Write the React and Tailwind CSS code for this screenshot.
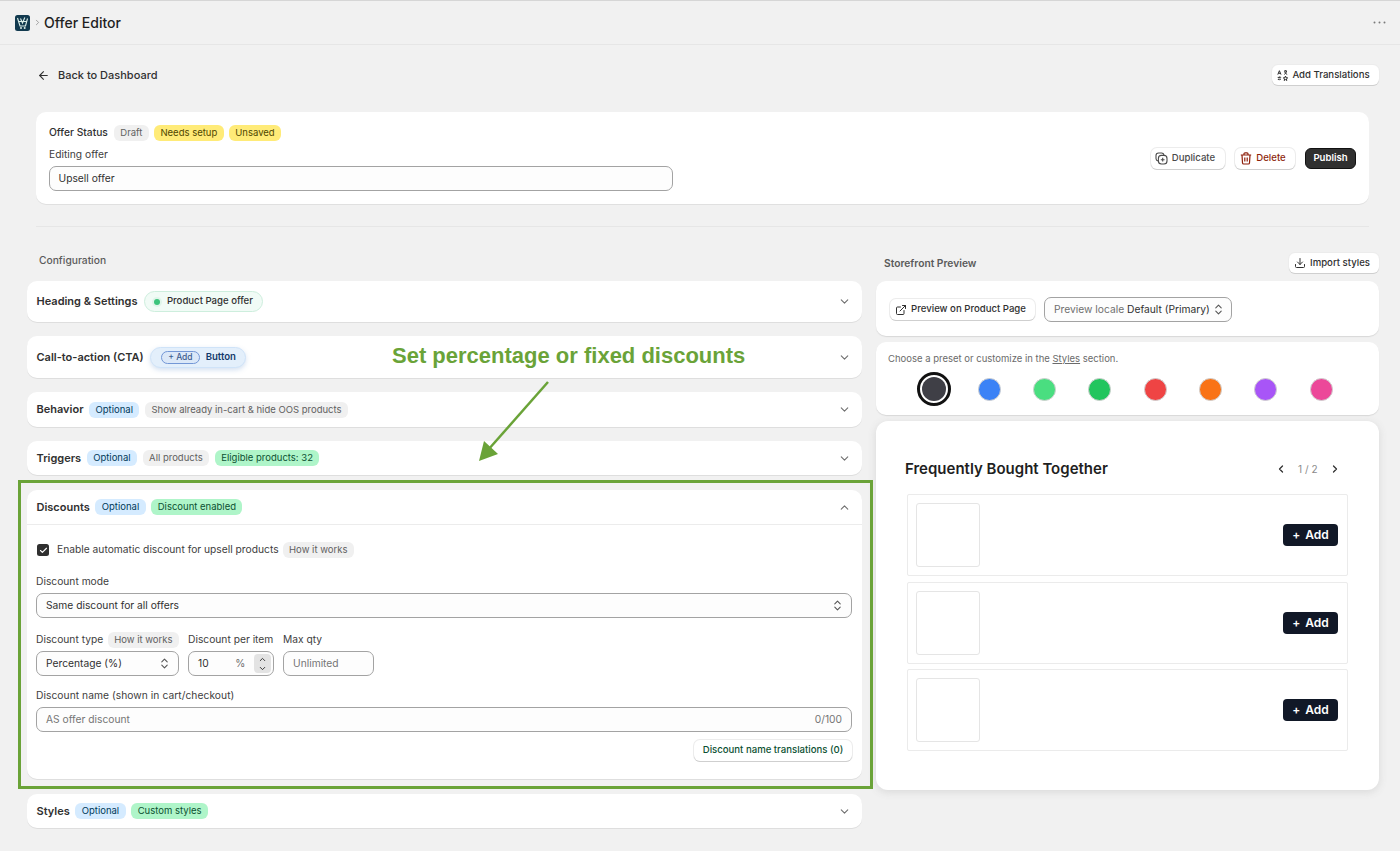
import React from "react";
import { ArrowLeft, ChevronDown, ChevronUp, ChevronLeft, ChevronRight, ChevronsUpDown, ExternalLink, Download, Check } from "lucide-react";

const Badge = ({ tone = "gray", children }) => {
  const tones = {
    gray: "bg-[#f0f0f0] text-[#616161]",
    yellow: "bg-[#ffeb78] text-[#4f4700]",
    blue: "bg-[#d5ebff] text-[#003a5a]",
    green: "bg-[#aff5c9] text-[#0c5132]",
  };
  return <span className={`inline-flex items-center h-[16px] px-[6.5px] rounded-[6px] text-[9.5px] leading-none whitespace-nowrap ${tones[tone]}`}>{children}</span>;
};

const Btn = ({ className = "", children }) => (
  <div className={`flex items-center justify-center gap-[4px] bg-white rounded-[6px] text-[9.6px] font-medium text-[#303030] shadow-[0_1px_0_0_#cfcfcf,0_0_0_1px_#ececec] whitespace-nowrap ${className}`}>{children}</div>
);

const Card = ({ title, h, children }) => (
  <div className={`bg-white rounded-[10px] shadow-[0_1px_0_0_#dedede] ${h}`}>
    <div className={`flex items-center justify-between pl-[9.5px] pr-[11px] ${h}`}>
      <div className="flex items-center gap-[5.5px]">
        <span className="text-[11px] font-semibold text-[#303030] whitespace-nowrap">{title}</span>
        {children}
      </div>
      <ChevronDown size={13} className="text-[#6f6f6f]" />
    </div>
  </div>
);

const Field = ({ className = "", children }) => (
  <div className={`flex items-center bg-[#fdfdfd] border border-[#a3a3a3] rounded-[7px] text-[10.25px] text-[#303030] ${className}`}>{children}</div>
);

const Product = () => (
  <div className="h-[82px] border border-[#ebebeb] rounded-[2px] flex items-center justify-between pl-[8px] pr-[9px]">
    <div className="w-[64px] h-[64px] border border-[#e5e5e5] rounded-[3px]" />
    <div className="w-[55px] h-[22px] bg-[#111827] rounded-[4px] text-white text-[12px] font-semibold flex items-center justify-center gap-[5px]"><span>+</span><span>Add</span></div>
  </div>
);

const colors = ["bg-[#3b82f6]", "bg-[#4ade80]", "bg-[#22c55e]", "bg-[#ef4444]", "bg-[#f97316]", "bg-[#a855f7]", "bg-[#ec4899]"];

const LangIcon = () => (
  <svg width="11" height="11" viewBox="0 0 11 11" fill="none" stroke="#303030" strokeWidth="1">
    <path d="M0.8 4.6 L2.4 0.7 L4 4.6 M1.4 3.3 H3.4" />
    <path d="M7 1 H10 M8.5 0.3 V1 M7.3 4.4 C8.6 3.6 9.4 2.4 9.5 1 M7.5 1.6 C8 3 9 4 10.2 4.5" />
    <path d="M0.7 7.4 H3.7 L2.7 6.4 M4 9.2 H1 L2 10.2" />
    <path d="M8.5 6 L9.1 7.7 L10.7 7.9 L9.4 8.9 L9.8 10.5 L8.5 9.6 L7.2 10.5 L7.6 8.9 L6.3 7.9 L7.9 7.7 Z" />
  </svg>
);

const DupIcon = () => (
  <svg width="13" height="13" viewBox="0 0 13 13" fill="none" stroke="#4a4a4a" strokeWidth="1.1">
    <path d="M3 9 C1.5 8.6 1 7.8 1 6.6 V3.6 C1 2 2 1 3.6 1 H6.6 C7.8 1 8.6 1.5 9 3" />
    <rect x="3.4" y="3.4" width="8.6" height="8.6" rx="3" />
    <path d="M7.7 5.8 V9.6 M5.8 7.7 H9.6" />
  </svg>
);

const TrashIcon = () => (
  <svg width="12" height="13" viewBox="0 0 12 13" fill="none" stroke="#8e1f0b" strokeWidth="1.2">
    <path d="M0.8 3 H11.2 M4 3 V1.8 C4 1.2 4.4 0.9 5 0.9 H7 C7.6 0.9 8 1.2 8 1.8 V3" />
    <path d="M2 3 L2.5 11 C2.6 11.7 3 12 3.6 12 H8.4 C9 12 9.4 11.7 9.5 11 L10 3" />
    <path d="M4.8 5.4 V9.4 M7.2 5.4 V9.4" />
  </svg>
);

export default function App() {
  return (
    <div className="relative h-[851px] overflow-hidden bg-[#f1f1f1] text-[#303030] font-['Inter',sans-serif] border-t border-[#d6d6d6]">
      <header className="h-[44px] flex items-center justify-between pl-[15px] pr-[14px] border-b border-[#e6e6e6]">
        <div className="flex items-center">
          <svg width="15" height="16" viewBox="0 0 15 16">
            <rect width="15" height="16" rx="2.5" fill="#123a4f" />
            <path d="M2.5 3 L5 11 H10.5 L12.5 3.5 M3.6 6.5 H11.6 M5.5 3.5 L7.5 8 L9.8 2.5" stroke="#dbeee8" strokeWidth="1.1" fill="none" />
            <circle cx="6" cy="13" r="1" fill="#dbeee8" /><circle cx="9.7" cy="13" r="1" fill="#dbeee8" />
          </svg>
          <ChevronRight size={9} className="text-[#8a8a8a] ml-[3px] mr-[2px]" />
          <span className="text-[14px] font-medium text-[#1f1f1f]">Offer Editor</span>
        </div>
        <svg width="13" height="3" viewBox="0 0 13 3" fill="#7a7a7a"><circle cx="1.5" cy="1.5" r="1" /><circle cx="6.5" cy="1.5" r="1" /><circle cx="11.5" cy="1.5" r="1" /></svg>
      </header>

      <main className="pl-[27px] pr-[21px]">
        <div className="flex items-center justify-between h-[20px] mt-[20px] pl-[10px]">
          <div className="flex items-center gap-[8px] text-[11px] font-medium text-[#303030]">
            <ArrowLeft size={13} /><span>Back to Dashboard</span>
          </div>
          <Btn className="w-[107px] h-[20px] pr-[4px]"><LangIcon />Add Translations</Btn>
        </div>

        <section className="ml-[9px] mr-[10px] mt-[27px] h-[92px] bg-white rounded-[10px] shadow-[0_1px_0_0_#e0e0e0] flex items-center justify-between pl-[13px] pr-[13px]">
          <div className="w-[624px]">
            <div className="flex items-center gap-[5px] h-[16px]">
              <span className="text-[10.25px] font-medium text-[#303030] mr-[1px]">Offer Status</span>
              <Badge>Draft</Badge><Badge tone="yellow">Needs setup</Badge><Badge tone="yellow">Unsaved</Badge>
            </div>
            <div className="text-[10.25px] text-[#404040] mt-[7px] mb-[5px] leading-[13px]">Editing offer</div>
            <Field className="h-[25px] pl-[8.5px]"><span className="mt-[1px]">Upsell offer</span></Field>
          </div>
          <div className="flex items-center gap-[10px]">
            <Btn className="w-[74px] h-[21px] pr-[6px] !text-[#4a4a4a]"><DupIcon />Duplicate</Btn>
            <Btn className="w-[60px] h-[21px] pr-[4px] !text-[#8e1f0b]"><TrashIcon />Delete</Btn>
            <div className="w-[51px] h-[21px] rounded-[6px] bg-[#303030] border border-[#111] text-white text-[9.6px] font-semibold flex items-center justify-center">Publish</div>
          </div>
        </section>

        <div className="ml-[9px] mr-[10px] mt-[22px] border-t border-[#e6e6e6]" />

        <div className="flex gap-[14px] mt-[26px]">
          <div className="w-[835px] flex flex-col">
            <div className="h-[20px] pl-[12px] flex items-center text-[10.25px] font-medium text-[#5a5a5a] mt-[-2px]">Configuration</div>
            <div className="mt-[10px]">
              <Card title="Heading & Settings" h="h-[41px]">
                <span className="flex items-center gap-[5px] h-[21px] ml-[1px] px-[9px] rounded-full border border-[#cdeedd] bg-[#f1fbf6] text-[9.6px] font-medium text-[#303030] whitespace-nowrap">
                  <span className="w-[6px] h-[6px] rounded-full bg-[#3cc47c] mr-[2px] ring-2 ring-[#e0f5ea]" />Product Page offer
                </span>
              </Card>
            </div>
            <div className="mt-[14px]">
              <Card title="Call-to-action (CTA)" h="h-[42px]">
                <span className="flex items-center gap-[6px] h-[21px] ml-[1px] pl-[10px] pr-[9px] rounded-full border border-[#cfe3f8] bg-[#e3effb] shadow-[0_2px_5px_rgba(80,130,200,0.25)] text-[9.6px] font-semibold text-[#133a6b] whitespace-nowrap">
                  <span className="h-[13px] px-[6px] flex items-center rounded-full border border-[#7397d6] text-[8.5px] font-medium text-[#3b5c8f] bg-[#dbe8f8]">+ Add</span>Button
                </span>
              </Card>
            </div>
            <div className="mt-[14px]">
              <Card title="Behavior" h="h-[35px]"><Badge tone="blue">Optional</Badge><Badge>Show already in-cart &amp; hide OOS products</Badge></Card>
            </div>
            <div className="mt-[14px]">
              <Card title="Triggers" h="h-[34px]"><Badge tone="blue">Optional</Badge><Badge>All products</Badge><Badge tone="green">Eligible products: 32</Badge></Card>
            </div>

            <div className="mt-[15px] bg-white rounded-[10px] shadow-[0_1px_0_0_#dedede] h-[289px]">
              <div className="h-[35px] flex items-center justify-between pl-[9.5px] pr-[11px] border-b border-[#ececec]">
                <div className="flex items-center gap-[5.5px]">
                  <span className="text-[11px] font-semibold text-[#303030]">Discounts</span>
                  <Badge tone="blue">Optional</Badge><Badge tone="green">Discount enabled</Badge>
                </div>
                <ChevronUp size={13} className="text-[#6f6f6f]" />
              </div>
              <div className="pl-[9px] pr-[10px] text-[10.25px] text-[#404040]">
                <div className="flex items-center mt-[17px] h-[16px]">
                  <span className="w-[12px] h-[12px] ml-[1px] rounded-[2.5px] bg-[#303030] flex items-center justify-center"><Check size={9} strokeWidth={3} className="text-white" /></span>
                  <span className="ml-[8px] mr-[4px] whitespace-nowrap">Enable automatic discount for upsell products</span>
                  <Badge>How it works</Badge>
                </div>
                <div className="mt-[17px] leading-[13px]">Discount mode</div>
                <Field className="h-[25px] mt-[5px] pl-[9px] pr-[7px] justify-between">Same discount for all offers<ChevronsUpDown size={13} className="text-[#555]" /></Field>
                <div className="flex gap-[9px] mt-[14px]">
                  <div className="w-[143px]">
                    <div className="flex items-center justify-between h-[16px] whitespace-nowrap">Discount type<Badge>How it works</Badge></div>
                    <Field className="h-[25px] mt-[3px] pl-[9px] pr-[7px] justify-between">Percentage (%)<ChevronsUpDown size={13} className="text-[#555]" /></Field>
                  </div>
                  <div className="w-[86px]">
                    <div className="flex items-center h-[16px] whitespace-nowrap">Discount per item</div>
                    <Field className="h-[25px] mt-[3px] pl-[9px] pr-[2px] justify-between border-[#6f6f6f]">
                      <span>10</span><span className="ml-[18px] text-[#6f6f6f]">%</span>
                      <span className="w-[17px] h-[19px] bg-[#e3e3e3] rounded-[4px] flex flex-col items-center justify-center"><ChevronUp size={9} strokeWidth={2.5} /><ChevronDown size={9} strokeWidth={2.5} /></span>
                    </Field>
                  </div>
                  <div className="w-[91px]">
                    <div className="flex items-center h-[16px]">Max qty</div>
                    <Field className="h-[25px] mt-[3px] pl-[9px] text-[#757575]">Unlimited</Field>
                  </div>
                </div>
                <div className="mt-[13px] leading-[13px] tracking-[0.05px]">Discount name (shown in cart/checkout)</div>
                <Field className="h-[25px] mt-[5px] pl-[9px] pr-[9px] justify-between text-[#757575]"><span>AS offer discount</span><span>0/100</span></Field>
                <div className="flex justify-end mt-[8px]">
                  <Btn className="w-[158px] h-[21px] !text-[#0c5132]">Discount name translations (0)</Btn>
                </div>
              </div>
            </div>

            <div className="mt-[15px]">
              <Card title="Styles" h="h-[34px]"><Badge tone="blue">Optional</Badge><Badge tone="green">Custom styles</Badge></Card>
            </div>
          </div>

          <div className="w-[503px] flex flex-col">
            <div className="h-[20px] flex items-center justify-between pl-[8px]">
              <span className="text-[10.25px] font-semibold text-[#5a5a5a] mt-[1px]">Storefront Preview</span>
              <Btn className="w-[90px] h-[20px] pr-[4px]"><Download size={12} />Import styles</Btn>
            </div>
            <div className="mt-[8px] h-[55px] bg-white rounded-[10px] shadow-[0_1px_1px_0_#d8d8d8] flex items-center pl-[14px] pt-[2px] gap-[9px]">
              <Btn className="w-[145px] h-[21px] pr-[4px]"><ExternalLink size={12} />Preview on Product Page</Btn>
              <Field className="w-[188px] h-[25px] pl-[9px] pr-[6px] justify-between whitespace-nowrap"><span><span className="text-[#6f6f6f]">Preview locale</span> Default (Primary)</span><ChevronsUpDown size={13} className="text-[#555]" /></Field>
            </div>
            <div className="mt-[6px] h-[73px] bg-white rounded-[10px] shadow-[0_1px_1px_0_#d8d8d8] pl-[12px] pt-[10px]">
              <div className="text-[9.5px] leading-[13px] text-[#6b6b6b]">Choose a preset or customize in the <span className="underline">Styles</span> section.</div>
              <div className="grid grid-cols-8 w-[443px] justify-items-center items-center h-[34px] mt-[7px] ml-[18px]">
                <span className="w-[34px] h-[34px] rounded-full border-[3px] border-[#111] flex items-center justify-center"><span className="w-[24px] h-[24px] rounded-full bg-[#3f3f46]" /></span>
                {colors.map((c) => <span key={c} className={`w-[23px] h-[23px] rounded-full border border-[#d0d0d0] ${c}`} />)}
              </div>
            </div>
            <div className="mt-[6px] h-[369px] bg-white rounded-[12px] shadow-[0_2px_8px_0_#d8d8d8] pl-[31px] pr-[31px] pt-[36px]">
              <div className="flex items-center justify-between h-[24px]">
                <span className="text-[15px] font-semibold text-[#1f1f1f] ml-[-2px]">Frequently Bought Together</span>
                <div className="flex items-center gap-[11.5px] mr-[7px] text-[10px] text-[#8a8a8a]">
                  <ChevronLeft size={12} className="text-[#303030]" strokeWidth={2.5} /><span>1 / 2</span><ChevronRight size={12} className="text-[#303030]" strokeWidth={2.5} />
                </div>
              </div>
              <div className="mt-[13px] flex flex-col gap-[5.5px]">
                <Product /><Product /><Product />
              </div>
            </div>
          </div>
        </div>
      </main>

      <div className="absolute left-[18px] top-[479px] w-[855px] h-[309px] border-[3px] border-[#6aa338] pointer-events-none" />
      <div className="absolute left-[392px] top-[342px] text-[22px] leading-[26px] font-bold text-[#6aa338] font-['Liberation_Sans',sans-serif] whitespace-nowrap">Set percentage or fixed discounts</div>
      <svg className="absolute left-[470px] top-[375px]" width="90" height="90" viewBox="0 0 90 90">
        <line x1="78" y1="6" x2="18" y2="74" stroke="#6aa338" strokeWidth="2.5" />
        <polygon points="9,85 14,65 28,78" fill="#6aa338" />
      </svg>
    </div>
  );
}
